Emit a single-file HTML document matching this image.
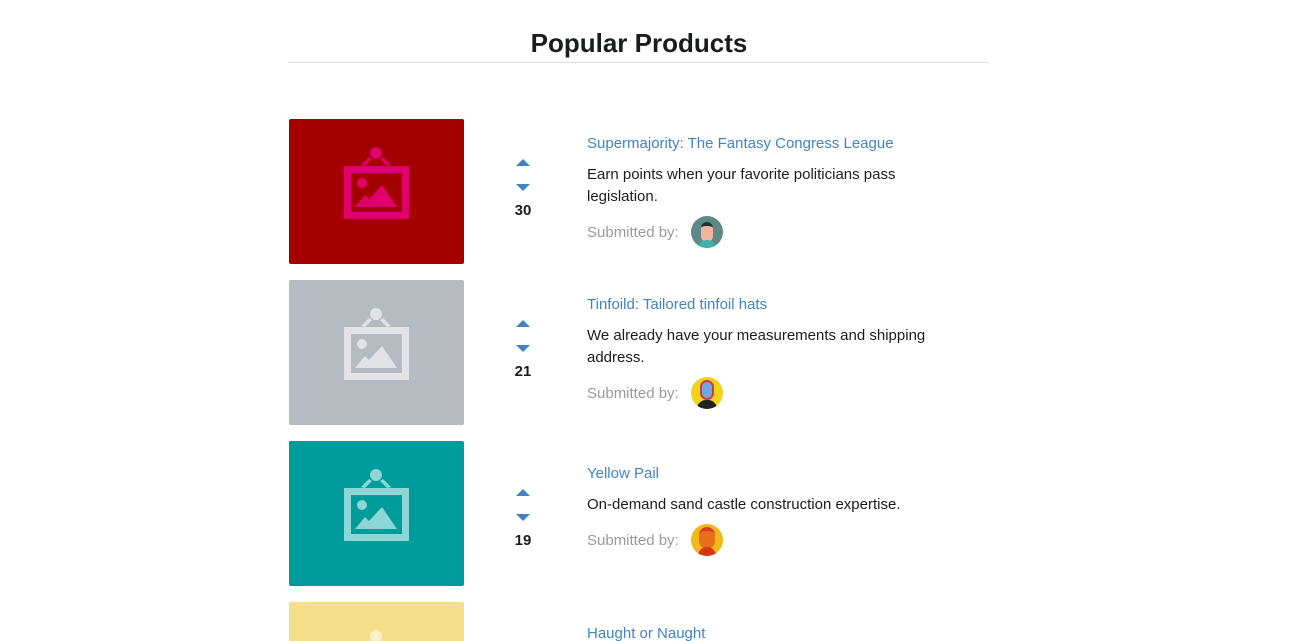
<!DOCTYPE html>
<html><head><meta charset="utf-8"><style>
html,body{margin:0;height:641px;overflow:hidden}
body{background:#fff;font-family:"Liberation Sans",sans-serif;width:1312px;position:relative;color:#1b1c1d}
h1{position:absolute;left:289px;width:700px;top:25px;margin:0;text-align:center;font-size:26px;font-weight:bold;line-height:36px;color:#1b1c1d}
.hr{position:absolute;left:289px;width:700px;top:62px;height:1px;background:#dedede}
.img{position:absolute;left:289px;width:175px;height:145px;border-radius:2px}
.up,.dn{position:absolute;left:516px;width:0;height:0;border-left:7px solid transparent;border-right:7px solid transparent}
.up{border-bottom:7px solid #4183c4}
.dn{border-top:7px solid #4183c4}
.cnt{position:absolute;left:503px;width:40px;text-align:center;font-weight:bold;font-size:15px}
.t{position:absolute;left:587px;font-size:15px;color:#4183c4;line-height:20px}
.d{position:absolute;left:587px;font-size:15px;line-height:22px;width:370px}
.s{position:absolute;left:587px;font-size:15px;color:#9a9a9a;line-height:20px}
.av{position:absolute;left:691px;width:32px;height:32px;border-radius:50%;overflow:hidden}
</style></head><body>
<h1>Popular Products</h1><div class="hr"></div>

<svg width="0" height="0" style="position:absolute"><defs>
<g id="ic"><circle cx="87" cy="34" r="6"/><path d="M80 38 L72 46 L76 47 L83 40 Z M94 38 L102 46 L98 47 L91 40 Z"/>
<path fill-rule="evenodd" d="M55 47 H120 V100 H55 Z M62 54 V93 H113 V54 Z"/>
<circle cx="73" cy="64" r="5"/><path d="M66 88 L76 76 L80 80 L93 66 L108 88 Z"/></g></defs></svg>

<div class="img" style="top:119px;background:#a50000"><svg width="175" height="145" fill="#e0006c"><use href="#ic"/></svg></div>
<div class="up" style="top:159px"></div><div class="dn" style="top:184px"></div><div class="cnt" style="top:202px">30</div>
<div class="t" style="top:134px">Supermajority: The Fantasy Congress League</div>
<div class="d" style="top:164px">Earn points when your favorite politicians pass legislation.</div>
<div class="s" style="top:223px">Submitted by:</div>
<div class="av" style="top:216px;background:#5d8a87"><div style="position:absolute;left:10px;top:6px;width:12px;height:16px;border-radius:6px;background:#f2b6a0;border-top:4px solid #233"></div><div style="position:absolute;left:7px;top:24px;width:18px;height:10px;border-radius:9px 9px 0 0;background:#3bb3a8"></div></div>

<div class="img" style="top:280px;background:#b6bbc2"><svg width="175" height="145" fill="#e1e3e6"><use href="#ic"/></svg></div>
<div class="up" style="top:320px"></div><div class="dn" style="top:345px"></div><div class="cnt" style="top:363px">21</div>
<div class="t" style="top:295px">Tinfoild: Tailored tinfoil hats</div>
<div class="d" style="top:325px">We already have your measurements and shipping address.</div>
<div class="s" style="top:384px">Submitted by:</div>
<div class="av" style="top:377px;background:#f0d418"><div style="position:absolute;left:9px;top:3px;width:14px;height:20px;border-radius:7px;background:#6fa8e0;border:2px solid #d8344a;box-sizing:border-box"></div><div style="position:absolute;left:6px;top:23px;width:20px;height:10px;border-radius:9px 9px 0 0;background:#222"></div></div>

<div class="img" style="top:441px;background:#009c9c"><svg width="175" height="145" fill="#8ed5d6"><use href="#ic"/></svg></div>
<div class="up" style="top:489px"></div><div class="dn" style="top:514px"></div><div class="cnt" style="top:532px">19</div>
<div class="t" style="top:464px">Yellow Pail</div>
<div class="d" style="top:494px">On-demand sand castle construction expertise.</div>
<div class="s" style="top:531px">Submitted by:</div>
<div class="av" style="top:524px;background:#f0b818"><div style="position:absolute;left:8px;top:3px;width:16px;height:18px;border-radius:8px;background:#e8701a;border-top:4px solid #d83a1a"></div><div style="position:absolute;left:7px;top:23px;width:18px;height:10px;border-radius:9px 9px 0 0;background:#d8341a"></div></div>

<div class="img" style="top:602px;background:#f5df8a"><svg width="175" height="145" fill="#fbf0c8"><use href="#ic"/></svg></div>
<div class="t" style="top:624px">Haught or Naught</div>
</body></html>
